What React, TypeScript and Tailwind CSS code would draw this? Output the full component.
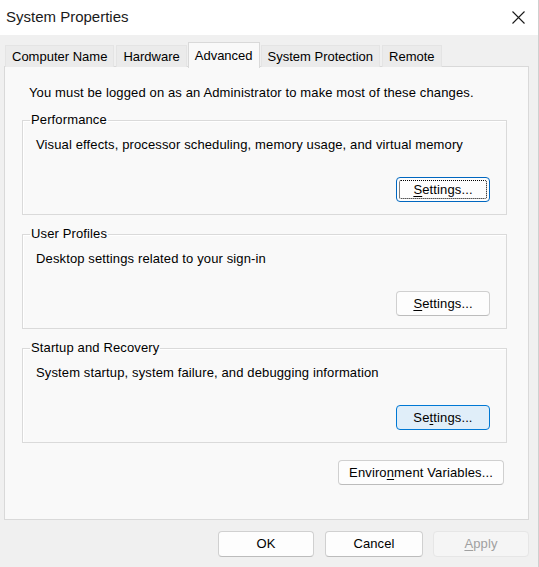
import React from 'react';

type BtnProps = {
  children: React.ReactNode;
  className?: string;
  state?: 'normal' | 'focused' | 'hover' | 'disabled';
};

const Btn: React.FC<BtnProps> = ({ children, className = '', state = 'normal' }) => {
  const look =
    state === 'focused'
      ? 'bg-[#fdfdfd] border-[#0067c0] text-black'
      : state === 'hover'
      ? 'bg-[#e0eef9] border-[#0078d4] text-black'
      : state === 'disabled'
      ? 'bg-[#f5f5f5] border-[#e6e6e6] text-[#a0a0a0]'
      : 'bg-[#fdfdfd] border-[#d0d0d0] border-b-[#bcbcbc] text-black';
  return (
    <button className={`relative flex items-center justify-center rounded-[4px] border ${look} ${className}`}>
      {state === 'focused' && (
        <span className="absolute inset-[2px] rounded-[2px] border border-dotted border-black"></span>
      )}
      <span className="leading-[16px]">{children}</span>
    </button>
  );
};

const U: React.FC<{ children: React.ReactNode }> = ({ children }) => (
  <span className="underline decoration-1 underline-offset-[2px]">{children}</span>
);

const Group: React.FC<{ title: string; text: string; children: React.ReactNode }> = ({ title, text, children }) => (
  <fieldset className="border border-[#dadada] pl-[7px] pr-[16px] pb-[12px] shadow-[inset_1px_1px_0_#ffffff]">
    <legend className="px-[1px] leading-[16px]">{title}</legend>
    <div className="mt-[9px] ml-[6px] leading-[16px]">{text}</div>
    <div className="mt-[24px] flex justify-end">{children}</div>
  </fieldset>
);

const tabs = ['Computer Name', 'Hardware', 'Advanced', 'System Protection', 'Remote'];

export default function App() {
  return (
    <div
      className="w-[539px] h-[567px] flex flex-col bg-[#f0f0f0] text-[13px] tracking-[0.13px] text-black border-r border-[#cfcfcf] overflow-hidden"
      style={{ fontFamily: '"Liberation Sans", Arial, sans-serif' }}
    >
      {/* title bar */}
      <div className="h-[35px] bg-white flex items-center justify-between pl-[6px] pr-[13px]">
        <span className="text-[15px] tracking-normal text-[#1a1a1a]">System Properties</span>
        <svg width="13" height="13" viewBox="0 0 13 13">
          <path d="M0.5 0.5 L12.5 12.5 M12.5 0.5 L0.5 12.5" stroke="#1a1a1a" strokeWidth="1.1" fill="none" />
        </svg>
      </div>

      <div className="pl-[4px] flex flex-col">
        {/* tabs */}
        <div className="mt-[7px] flex items-end relative z-10 tracking-normal">
          {tabs.map(t =>
            t === 'Advanced' ? (
              <div
                key={t}
                className="h-[26px] px-[6px] flex items-center bg-[#f9f9f9] border border-b-0 border-[#d9d9d9] -mb-px"
              >
                {t}
              </div>
            ) : (
              <div
                key={t}
                className="h-[22px] px-[6px] mx-[1px] flex items-center bg-[#ebebeb] border-t border-l border-r border-[#e4e4e4]"
              >
                {t}
              </div>
            )
          )}
        </div>

        {/* panel */}
        <div className="w-[525px] h-[454px] -mt-px border border-[#d9d9d9] bg-[#f9f9f9] pl-[17px] pr-[21px] pt-[18px] flex flex-col">
          <div className="ml-[7px] leading-[16px]">
            You must be logged on as an Administrator to make most of these changes.
          </div>
          <div className="mt-[11px] flex flex-col gap-[11px]">
            <Group title="Performance" text="Visual effects, processor scheduling, memory usage, and virtual memory">
              <Btn state="focused" className="w-[94px] h-[25px]">
                <U>S</U>ettings...
              </Btn>
            </Group>
            <Group title="User Profiles" text="Desktop settings related to your sign-in">
              <Btn className="w-[94px] h-[25px]">
                <U>S</U>ettings...
              </Btn>
            </Group>
            <Group title="Startup and Recovery" text="System startup, system failure, and debugging information">
              <Btn state="hover" className="w-[94px] h-[25px]">
                Se<U>t</U>tings...
              </Btn>
            </Group>
          </div>
          <div className="mt-[17px] flex justify-end pr-[3px]">
            <Btn className="w-[166px] h-[25px]">
              Enviro<U>n</U>ment Variables...
            </Btn>
          </div>
        </div>

        {/* bottom buttons */}
        <div className="w-[525px] mt-[11px] flex justify-end">
          <Btn className="w-[96px] h-[26px] mr-[11px]">OK</Btn>
          <Btn className="w-[98px] h-[26px] mr-[10px]">Cancel</Btn>
          <Btn state="disabled" className="w-[96px] h-[26px]">
            <U>A</U>pply
          </Btn>
        </div>
      </div>
    </div>
  );
}
